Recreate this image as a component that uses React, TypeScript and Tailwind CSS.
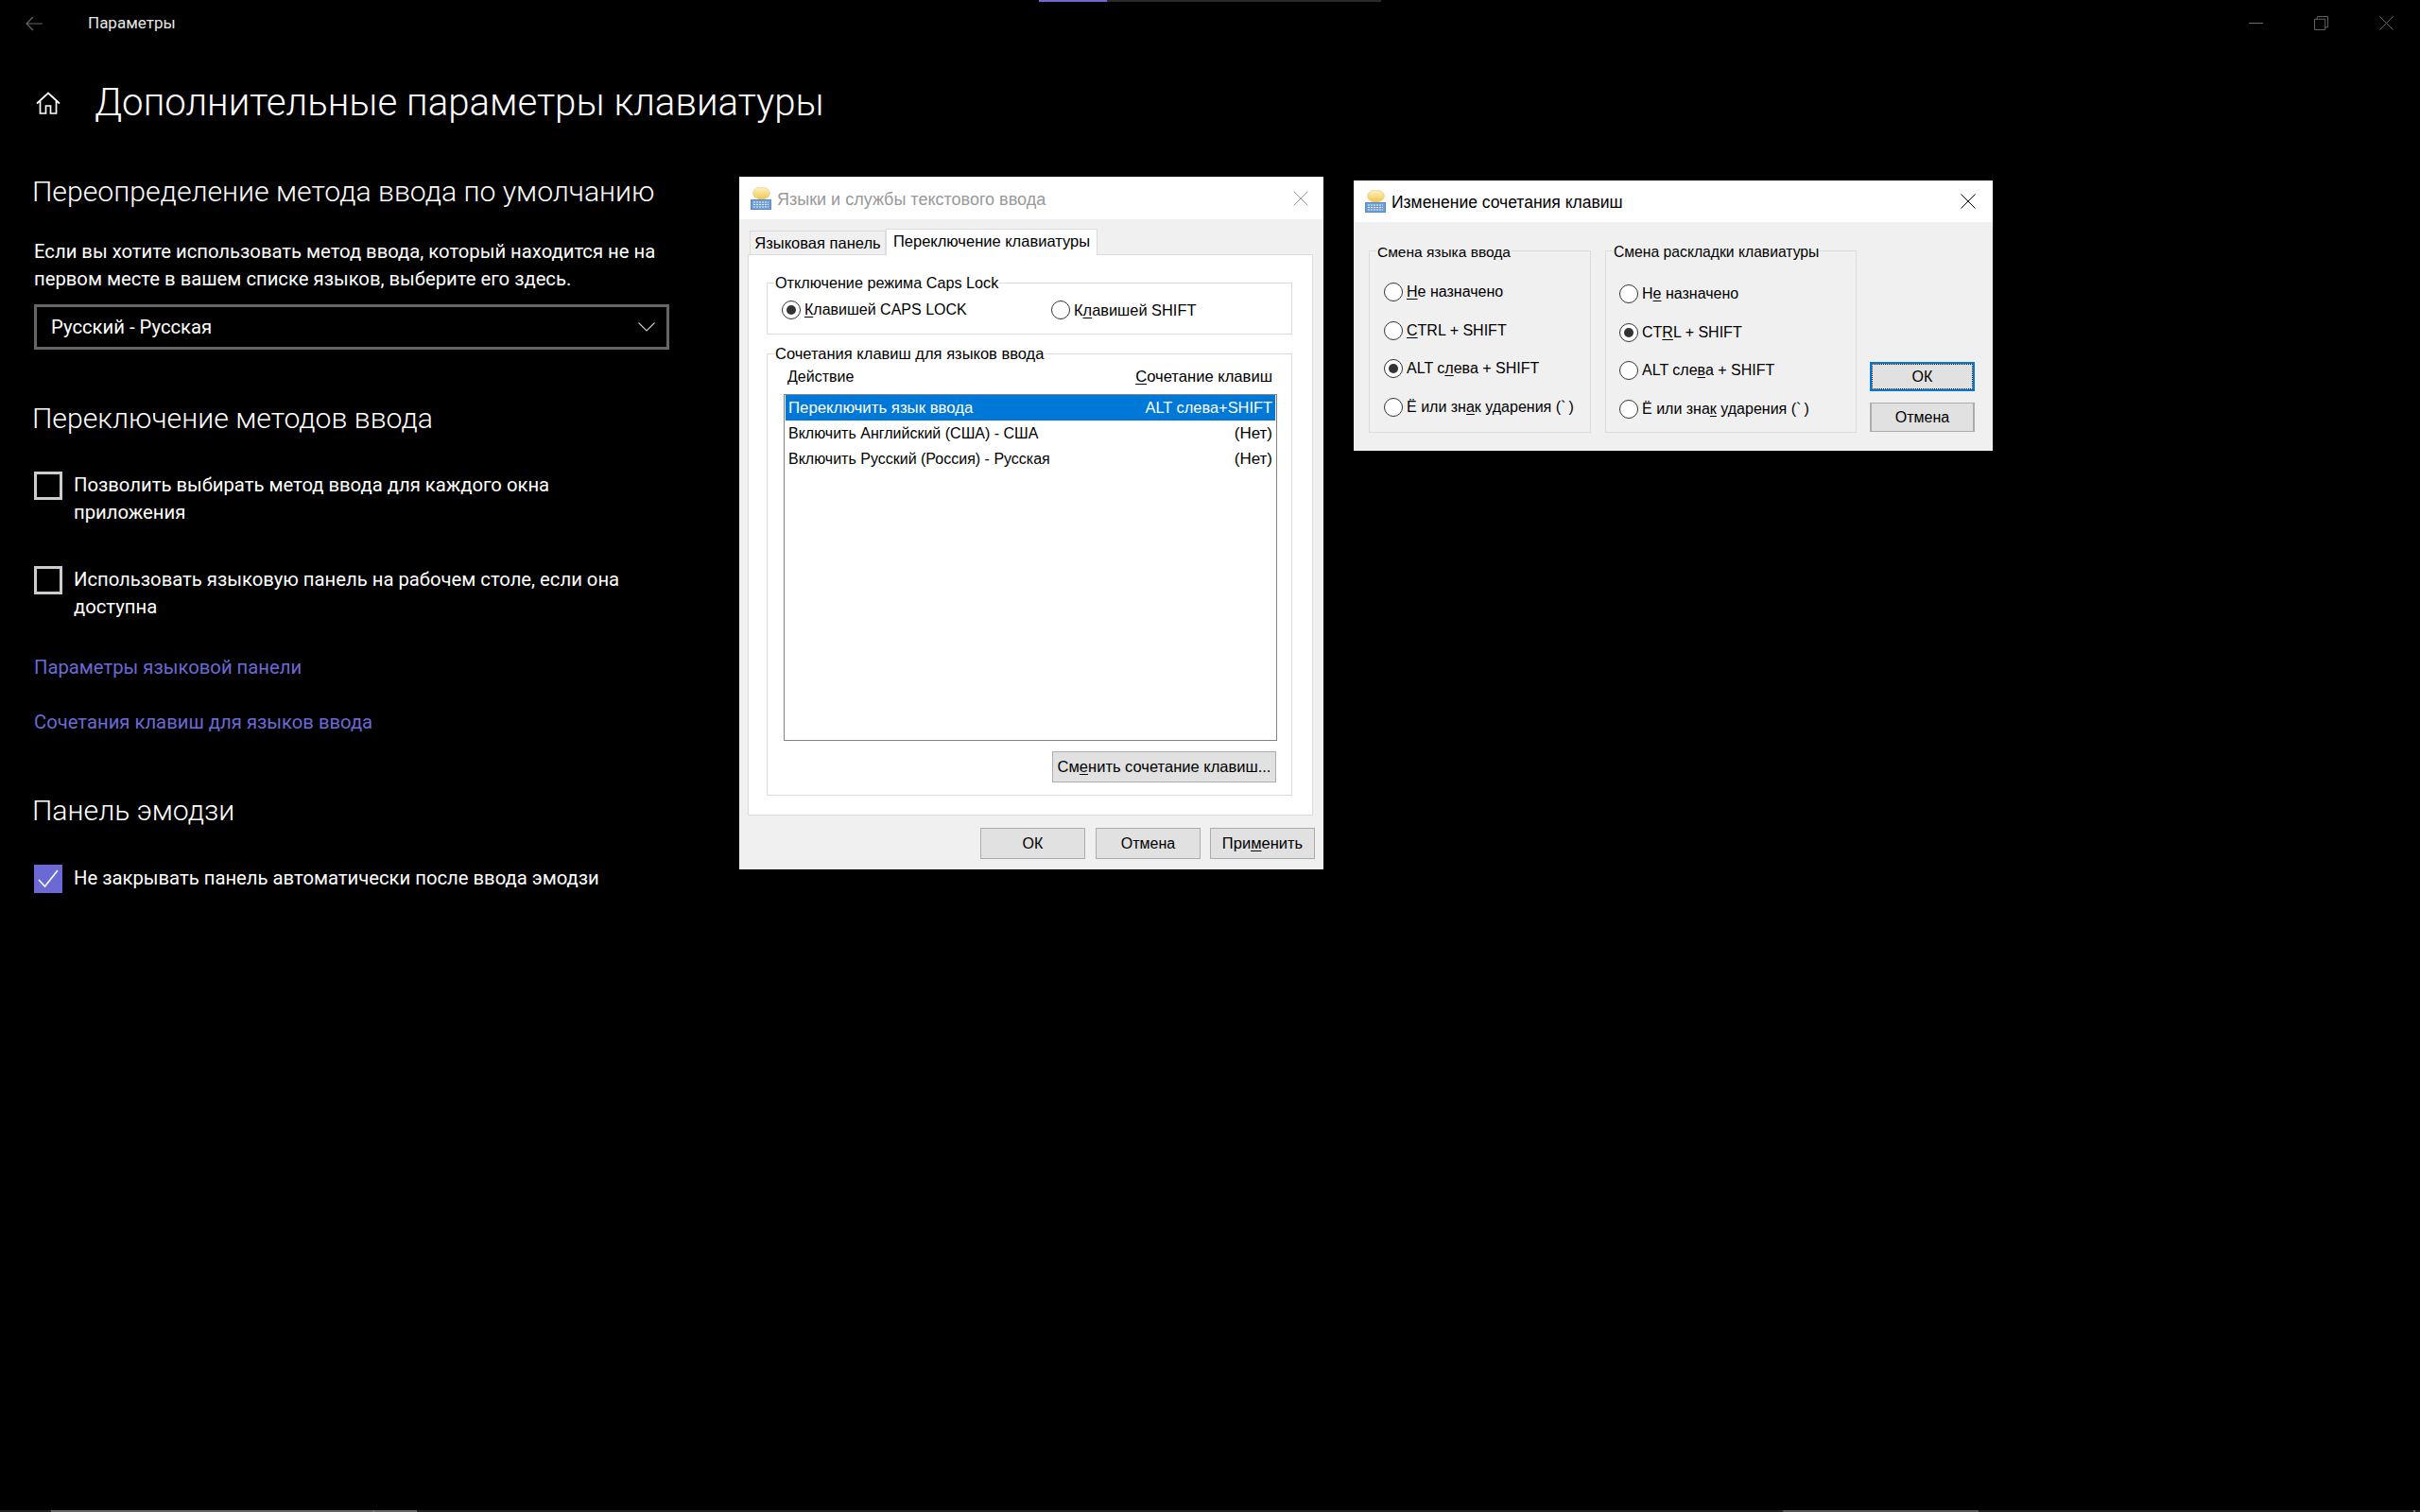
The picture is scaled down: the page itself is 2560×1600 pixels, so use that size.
const settingsFont = "font-['Roboto',sans-serif]";
const dialogFont = "font-['Liberation_Sans',Arial,sans-serif]";

const KeyboardBalloonIcon = ({ className }: { className?: string }) => (
  <svg viewBox="0 0 22 24" className={className}>
    <defs>
      <linearGradient id="balloon" x1="0" y1="0" x2="0" y2="1">
        <stop offset="0" stopColor="#fff3c4" />
        <stop offset="1" stopColor="#f0c550" />
      </linearGradient>
    </defs>
    <ellipse cx="11.5" cy="6.5" rx="9" ry="6.5" fill="url(#balloon)" stroke="#e2c476" strokeWidth="0.6" />
    <path d="M8 12l3 3 3-3z" fill="#f0c550" />
    <rect x="0.5" y="13.5" width="21" height="10" fill="#6f9fd4" stroke="#5a8ac2" />
    <path d="M3 16h16M3 18.5h16M3 21h16" stroke="#e8f1fb" strokeWidth="1" strokeDasharray="2 1" />
  </svg>
);

const CloseIcon = ({ className }: { className?: string }) => (
  <svg viewBox="0 0 16 16" className={className} fill="none" stroke="currentColor" strokeWidth="1">
    <path d="M0.5 0.5l15 15M15.5 0.5l-15 15" />
  </svg>
);

const Checkbox = ({ checked, label }: { checked?: boolean; label: string }) => (
  <div className="flex gap-3">
    {checked ? (
      <div className="w-[30px] h-[30px] shrink-0 bg-[#6b69d6] flex items-center justify-center">
        <svg viewBox="0 0 24 24" className="w-[24px] h-[24px]" fill="none" stroke="#fff" strokeWidth="1.6">
          <path d="M2 13l6.5 7L22 3" />
        </svg>
      </div>
    ) : (
      <div className="w-[30px] h-[30px] shrink-0 border-[3px] border-[#cccccc]" />
    )}
    <span className="text-[20.25px] leading-[29px] text-white w-[600px]">{label}</span>
  </div>
);

const Radio = ({ checked, label }: { checked?: boolean; label: React.ReactNode }) => (
  <div className="flex items-center gap-[4px] h-[20px]">
    <div className="w-[20px] h-[20px] shrink-0 rounded-full border border-[#333] bg-white flex items-center justify-center">
      {checked && <div className="w-[10px] h-[10px] rounded-full bg-[#333]" />}
    </div>
    <span className="text-[16px] text-black whitespace-nowrap">{label}</span>
  </div>
);

const GroupBox = ({
  title,
  className,
  legendClass,
  children,
}: {
  title: string;
  className: string;
  legendClass: string;
  children: React.ReactNode;
}) => (
  <div className={`relative border border-[#dcdcdc] ${className}`}>
    <span className={`absolute left-[7px] px-[1px] leading-[20px] text-black whitespace-nowrap bg-inherit ${legendClass}`}>
      {title}
    </span>
    {children}
  </div>
);

const DialogButton = ({ className, children }: { className: string; children: React.ReactNode }) => (
  <div className={`flex items-center justify-center bg-[#e1e1e1] border-[#adadad] text-black ${className}`}>
    {children}
  </div>
);

const u = (s: string) => <span className="underline underline-offset-2">{s}</span>;

const LanguagesDialog = () => (
  <div className={`absolute left-[782px] top-[187px] w-[618px] h-[733px] bg-[#f0f0f0] flex flex-col ${dialogFont}`}>
    <div className="h-[45px] shrink-0 bg-white flex items-center pl-[12px] pr-[16px]">
      <KeyboardBalloonIcon className="w-[22px] h-[24px] mr-[6px]" />
      <span className="text-[18px] text-[#999999] pt-[3px]">Языки и службы текстового ввода</span>
      <CloseIcon className="w-[16px] h-[16px] ml-auto text-[#999999]" />
    </div>
    <div className="pl-[9px] pt-[10px] flex flex-col">
      <div className="flex items-end h-[27px] pl-[2px] relative z-10">
        <div className="w-[144px] h-[25px] bg-[#f0f0f0] border border-b-0 border-[#dcdcdc] flex items-center justify-center text-[16.5px] text-black">
          Языковая панель
        </div>
        <div className="w-[224px] h-[28px] mb-[-1px] bg-white border border-b-0 border-[#dcdcdc] flex items-center justify-center pb-[3px] text-[16.5px] text-black">
          Переключение клавиатуры
        </div>
      </div>
      <div className="w-[598px] h-[594px] bg-white border border-[#dcdcdc] pl-[19px] pt-[29px] flex flex-col">
        <GroupBox title="Отключение режима Caps Lock" legendClass="top-[-11px] text-[16.2px]" className="w-[556px] h-[55px] shrink-0 bg-white">
          <div className="flex pl-[15px] pt-[18px]">
            <div className="w-[285px]">
              <Radio checked label={<>{u("К")}лавишей CAPS LOCK</>} />
            </div>
            <Radio label={<span className="text-[16.4px]">К{u("л")}авишей SHIFT</span>} />
          </div>
        </GroupBox>
        <GroupBox title="Сочетания клавиш для языков ввода" legendClass="top-[-11px] text-[16.5px]" className="w-[556px] h-[468px] mt-[20px] shrink-0 bg-white">
          <div className="pl-[17px] pt-[14px] w-[539px]">
            <div className="flex justify-between pl-[4px] pr-[5px] text-[16px] leading-[20px] text-black">
              <span>Действие</span>
              <span className="text-[16.6px]">{u("С")}очетание клавиш</span>
            </div>
            <div className="mt-[8px] w-[522px] h-[367px] border border-[#82828c] bg-white px-[1px]">
              <div className="h-[27px] bg-[#0078d7] text-white flex items-center justify-between pl-[3px] pr-[3px] text-[16px]">
                <span className="text-[16.8px]">Переключить язык ввода</span>
                <span className="text-[16.4px]">ALT слева+SHIFT</span>
              </div>
              <div className="h-[27px] text-black flex items-center justify-between pl-[3px] pr-[3px] text-[16px]">
                <span>Включить Английский (США) - США</span>
                <span className="text-[17px]">(Нет)</span>
              </div>
              <div className="h-[27px] text-black flex items-center justify-between pl-[3px] pr-[3px] text-[16px]">
                <span>Включить Русский (Россия) - Русская</span>
                <span className="text-[17px]">(Нет)</span>
              </div>
            </div>
            <div className="flex justify-end mt-[11px] w-[521px]">
              <DialogButton className="w-[237px] h-[33px] border text-[16.5px]">См{u("е")}нить сочетание клавиш...</DialogButton>
            </div>
          </div>
        </GroupBox>
      </div>
    </div>
    <div className="flex justify-end gap-[10px] pr-[9px] pt-[13px]">
      <DialogButton className="w-[111px] h-[33px] mr-[1px] border text-[16px]">ОК</DialogButton>
      <DialogButton className="w-[111px] h-[33px] border text-[16px]">Отмена</DialogButton>
      <DialogButton className="w-[111px] h-[33px] border text-[16.5px]">При{u("м")}енить</DialogButton>
    </div>
  </div>
);

const ShortcutDialog = () => (
  <div className={`absolute left-[1432px] top-[191px] w-[676px] h-[286px] bg-[#f0f0f0] flex flex-col ${dialogFont}`}>
    <div className="h-[44px] shrink-0 bg-white flex items-center pl-[12px] pr-[12px]">
      <KeyboardBalloonIcon className="w-[22px] h-[24px] mr-[6px]" />
      <span className="text-[17.5px] text-black pt-[2px]">Изменение сочетания клавиш</span>
      <CloseIcon className="w-[16px] h-[16px] ml-auto mr-[6px] text-black" />
    </div>
    <div className="flex pl-[16px] pt-[30px]">
      <GroupBox title="Смена языка ввода" legendClass="top-[-9px] left-[6px] text-[15.5px]" className="w-[235px] h-[193px] bg-[#f0f0f0]">
        <div className="flex flex-col pl-[15px] pt-[33px] gap-[20.5px]">
          <Radio label={<>{u("Н")}е назначено</>} />
          <Radio label={<>{u("C")}TRL + SHIFT</>} />
          <Radio checked label={<>ALT с{u("л")}ева + SHIFT</>} />
          <Radio label={<>Ё или зн{u("а")}к ударения (`{"\u2009"})</>} />
        </div>
      </GroupBox>
      <GroupBox title="Смена раскладки клавиатуры" legendClass="top-[-9px] left-[6px] text-[15.7px]" className="w-[266px] h-[193px] ml-[15px] bg-[#f0f0f0]">
        <div className="flex flex-col pl-[14px] pt-[35px] gap-[20.5px]">
          <Radio label={<>Н{u("е")} назначено</>} />
          <Radio checked label={<>CT{u("R")}L + SHIFT</>} />
          <Radio label={<>ALT сле{u("в")}а + SHIFT</>} />
          <Radio label={<>Ё или зна{u("к")} ударения (`{"\u2009"})</>} />
        </div>
      </GroupBox>
      <div className="flex flex-col ml-[14px] pt-[118px] gap-[12px]">
        <div className="w-[111px] h-[31px] border-2 border-[#0078d7] bg-[#e1e1e1] flex items-center justify-center text-[16px] text-black outline-1 outline-dotted outline-black outline-offset-[-3px]">
          ОК
        </div>
        <DialogButton className="w-[111px] h-[31px] border-x-2 border-y text-[16px]">Отмена</DialogButton>
      </div>
    </div>
  </div>
);

const ScrollStrip = () => (
  <div className="absolute left-0 right-0 bottom-0 h-[2px] bg-[#222222]">
    <div className="absolute left-[54px] w-[387px] h-[2px] bg-[#666666]" />
    <div className="absolute left-[395px] w-px h-[2px] bg-[#888888]" />
    <div className="absolute left-[1886px] w-[207px] h-[2px] bg-[#555555]" />
    <div className="absolute left-[2553px] w-[2px] h-[2px] bg-[#777777]" />
  </div>
);

export default function App() {
  return (
    <div className={`relative w-[2560px] h-[1600px] bg-black overflow-hidden text-white ${settingsFont}`}>
      <div className="absolute left-[1099px] top-0 w-[362px] h-[2px] bg-[#2a2a2a]">
        <div className="w-[72px] h-[2px] bg-[#6b69d6]" />
      </div>

      <div className="h-[49px] flex items-center relative">
        <svg viewBox="0 0 18 16" className="w-[18px] h-[16px] ml-[27px]" fill="none" stroke="#666" strokeWidth="1.2">
          <path d="M18 8H1M8 1L1 8l7 7" />
        </svg>
        <span className="ml-[48px] text-[17px] text-[#e6e6e6]">Параметры</span>
        <div className="ml-auto flex items-center text-[#6b6b6b]">
          <div className="w-[15px] h-px bg-[#6b6b6b]" />
          <svg viewBox="0 0 16 16" className="w-[15px] h-[15px] ml-[54px]" fill="none" stroke="#6b6b6b" strokeWidth="1">
            <path d="M3.5 3.5V0.5h12v12h-3M0.5 3.5h12v12h-12z" />
          </svg>
          <CloseIcon className="w-[15px] h-[15px] ml-[54px] mr-[28px]" />
        </div>
      </div>

      <div className="pl-[36px] w-[760px]">
        <div className="flex items-center mt-[38px] h-[44px]">
          <svg viewBox="0 0 26 24" className="w-[26px] h-[24px] ml-[2px] shrink-0" fill="none" stroke="#fff" strokeWidth="1.7">
            <path d="M1 12.5L13 1.5l12 11M4.5 10v13h6v-8h5v8h6V10" />
          </svg>
          <h1 className="ml-[36px] text-[40.2px] font-light leading-[44px] whitespace-nowrap">Дополнительные параметры клавиатуры</h1>
        </div>
        <h2 className="mt-[53px] ml-[-2px] text-[30.2px] font-light leading-[38px]">Переопределение метода ввода по умолчанию</h2>
        <p className="mt-[30px] text-[20.25px] leading-[29px] w-[680px]">
          Если вы хотите использовать метод ввода, который находится не на первом месте в вашем списке языков, выберите его здесь.
        </p>
        <div className="mt-[12px] w-[672px] h-[48px] border-[3px] border-[#666666] flex items-center pl-[15px] pr-[12px] text-[20.25px]">
          <span>Русский - Русская</span>
          <svg viewBox="0 0 18 10" className="w-[18px] h-[10px] ml-auto" fill="none" stroke="#ccc" strokeWidth="1.1">
            <path d="M0.5 0.5L9 9l8.5-8.5" />
          </svg>
        </div>
        <h2 className="mt-[54px] ml-[-2px] text-[30.2px] font-light leading-[38px]">Переключение методов ввода</h2>
        <div className="mt-[37px]">
          <Checkbox label="Позволить выбирать метод ввода для каждого окна приложения" />
        </div>
        <div className="mt-[42px]">
          <Checkbox label="Использовать языковую панель на рабочем столе, если она доступна" />
        </div>
        <div className="mt-[35px] text-[20.25px] leading-[29px] text-[#6b69d6]">Параметры языковой панели</div>
        <div className="mt-[29px] text-[20.25px] leading-[29px] text-[#6b69d6]">Сочетания клавиш для языков ввода</div>
        <h2 className="mt-[60px] ml-[-2px] text-[30.2px] font-light leading-[38px]">Панель эмодзи</h2>
        <div className="mt-[38px]">
          <Checkbox checked label="Не закрывать панель автоматически после ввода эмодзи" />
        </div>
      </div>

      <LanguagesDialog />
      <ShortcutDialog />
      <ScrollStrip />
    </div>
  );
}
